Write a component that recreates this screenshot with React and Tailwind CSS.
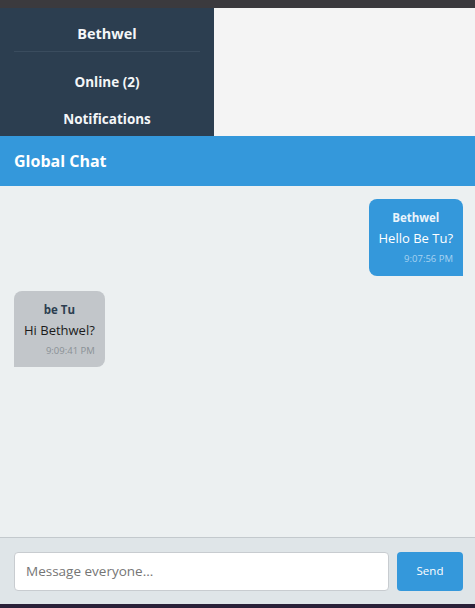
import React, { useState } from 'react';

const messages = [
  { id: 1, user: 'Bethwel', text: 'Hello Be Tu?', time: '9:07:56 PM', mine: true },
  { id: 2, user: 'be Tu', text: 'Hi Bethwel?', time: '9:09:41 PM', mine: false },
];

const App = () => {
  const [draft, setDraft] = useState('');

  return (
    <div className="h-[608px] w-[475px] flex flex-col font-['Open_Sans',sans-serif] overflow-hidden">
      <div className="h-2 bg-[#3b3a3e]"></div>

      {/* Sidebar + empty panel */}
      <div className="flex h-32">
        <div className="w-[214px] bg-[#2c3e50] text-[#f4f6f8] flex flex-col items-center px-[14px]">
          <div className="w-full text-center font-bold text-[14.5px] pt-[15px] pb-[6px] border-b border-[#3a4c5e]">
            Bethwel
          </div>
          <div className="font-bold text-[13.5px] mt-[20px]">Online (2)</div>
          <div className="font-bold text-[13.5px] mt-[17px]">Notifications</div>
        </div>
        <div className="flex-1 bg-[#f4f4f4]"></div>
      </div>

      {/* Header */}
      <div className="h-[50px] bg-[#3498db] flex items-center px-[14px]">
        <h1 className="text-white font-bold text-[16px]">Global Chat</h1>
      </div>

      {/* Messages */}
      <div className="flex-1 bg-[#ecf0f1] pl-[14px] pr-3 pt-[13px] flex flex-col gap-[15px]">
        {messages.map((m) =>
          m.mine ? (
            <div key={m.id} className="self-end bg-[#3498db] text-white rounded-lg rounded-br-none px-[10px] pt-[10px] pb-[9px] text-right">
              <div className="text-[11.5px] font-bold text-center text-[#eaf4fb]">{m.user}</div>
              <div className="text-[13px] mt-[2px] leading-[20px]">{m.text}</div>
              <div className="text-[9.5px] text-[#a8d3f1] mt-[4px]">{m.time}</div>
            </div>
          ) : (
            <div key={m.id} className="self-start bg-[#c2c6ca] rounded-lg rounded-bl-none px-[10px] pt-[10px] pb-[9px] text-right">
              <div className="text-[11.5px] font-bold text-center text-[#2c3e50]">{m.user}</div>
              <div className="text-[13px] mt-[2px] leading-[20px] text-[#1b1b1b]">{m.text}</div>
              <div className="text-[9.5px] text-[#8a9196] mt-[4px]">{m.time}</div>
            </div>
          )
        )}
      </div>

      {/* Composer */}
      <div className="h-[67px] bg-[#dfe5e8] border-t border-[#c3c9cd] flex items-center gap-2 pl-[14px] pr-3">
        <input
          type="text"
          value={draft}
          onChange={(e) => setDraft(e.target.value)}
          placeholder="Message everyone..."
          className="flex-1 h-[39px] bg-white border border-[#c8ccd0] rounded px-[11px] text-[13.5px] placeholder-[#757575] outline-none"
        />
        <button className="w-[66px] h-[39px] bg-[#3498db] text-white text-[11.5px] rounded">
          Send
        </button>
      </div>

      <div className="h-1 bg-[#2a2038]"></div>
    </div>
  );
};

export default App;
